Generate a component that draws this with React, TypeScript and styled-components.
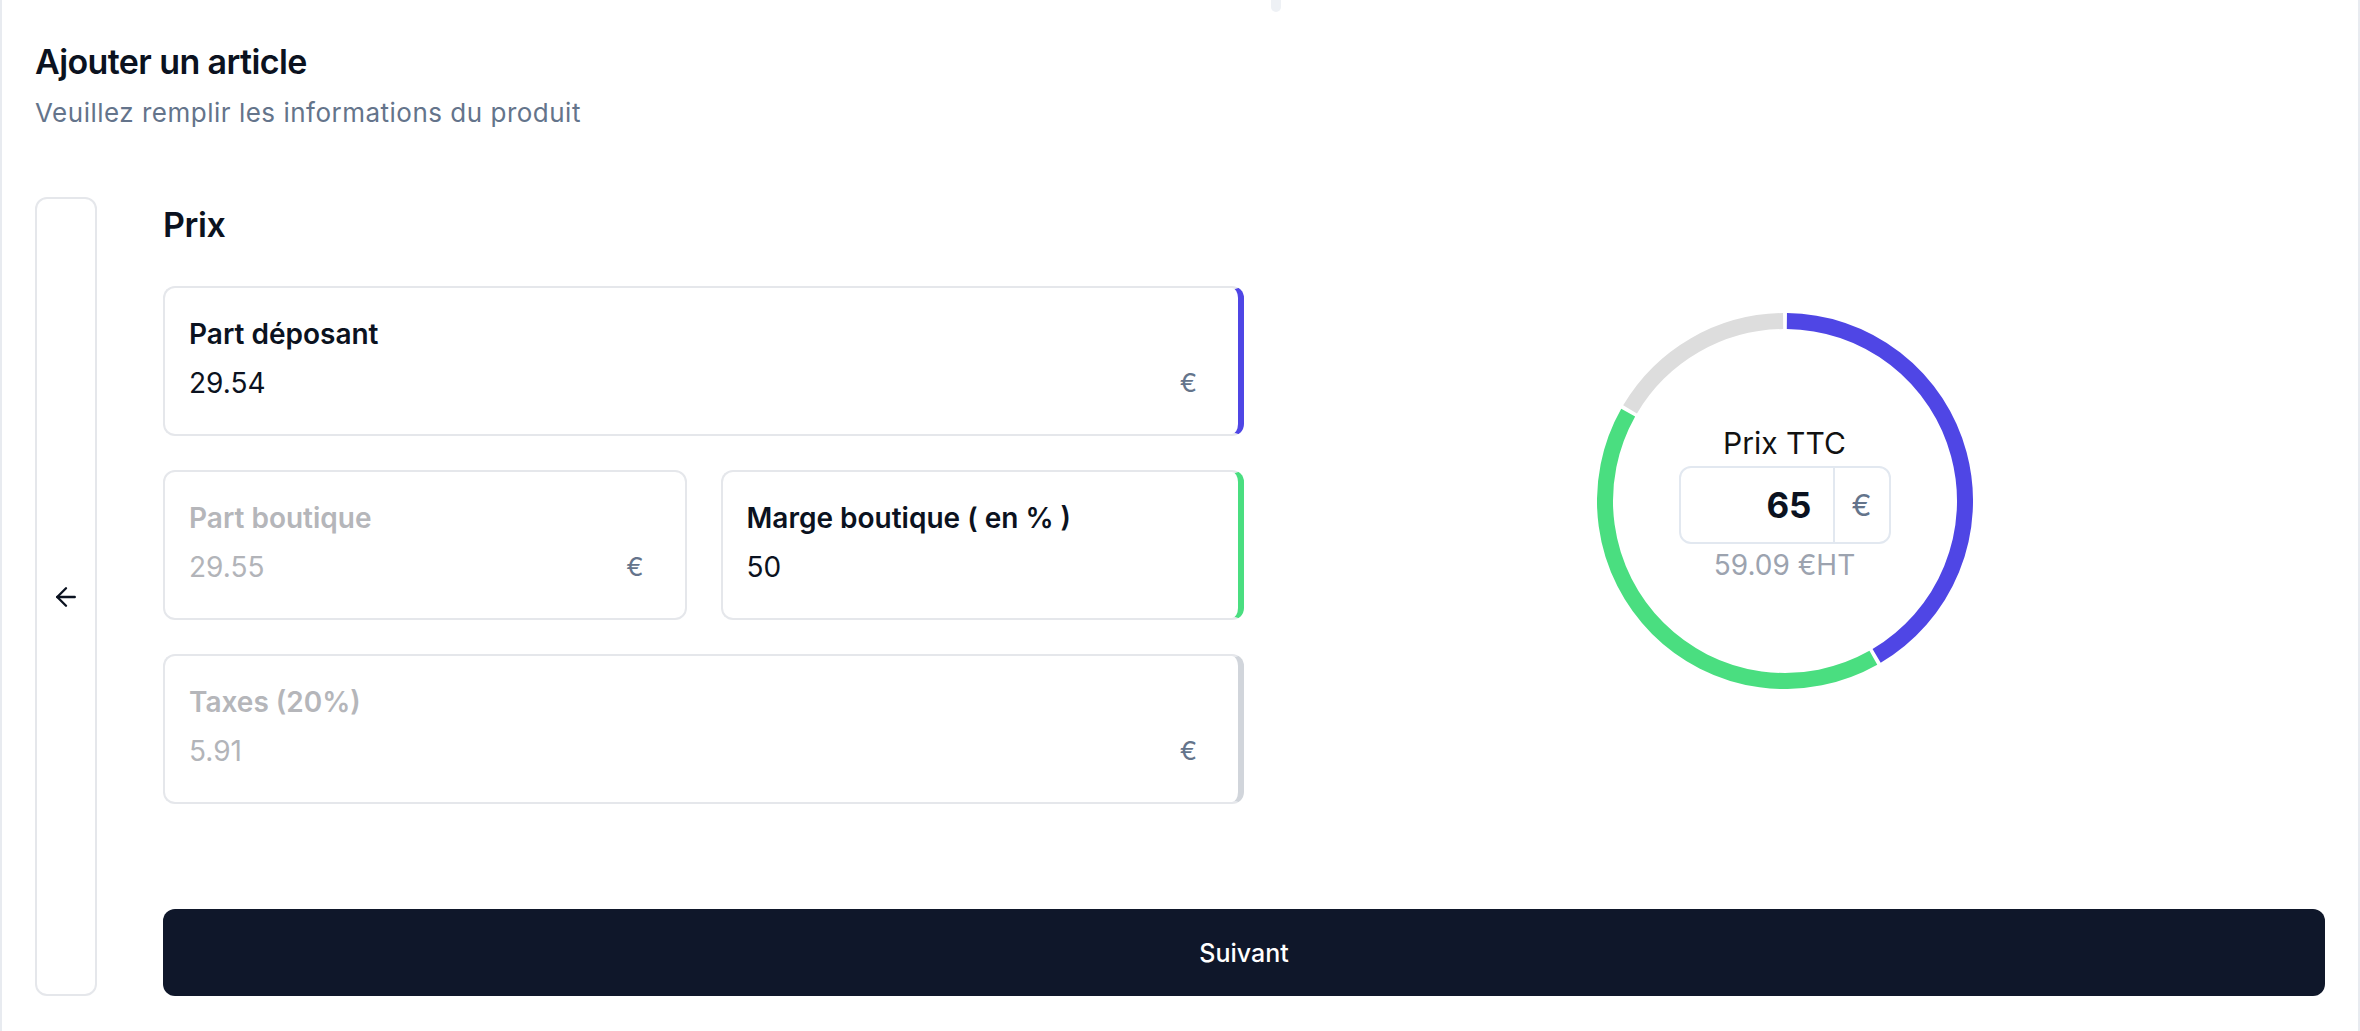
import { FC } from "react";
import styled, { createGlobalStyle } from "styled-components";
import { ArrowLeft } from "lucide-react";

const GlobalStyle = createGlobalStyle`
    html, body {
        margin: 0;
        padding: 0;
        background: #ffffff;
    }
    body {
        font-family: Inter, "Noto Sans", "Liberation Sans", sans-serif;
        color: #0f172a;
        -webkit-font-smoothing: antialiased;
    }
    * {
        box-sizing: border-box;
    }
`;

type Field = {
    label: string;
    value: string;
    accent?: string;
    disabled?: boolean;
    suffix?: boolean;
};

const deposant: Field = { label: "Part déposant", value: "29.54", accent: "#4f46e5", suffix: true };
const boutique: Field = { label: "Part boutique", value: "29.55", disabled: true, suffix: true };
const marge: Field = { label: "Marge boutique ( en % )", value: "50", accent: "#4ade80" };
const taxes: Field = { label: "Taxes (20%)", value: "5.91", accent: "#d1d5db", disabled: true, suffix: true };

// segments of the ring, in degrees clockwise from 12 o'clock
const segments = [
    { from: 0, to: 150, color: "#4f46e5" },
    { from: 150, to: 300, color: "#4ade80" },
    { from: 300, to: 360, color: "#dddddd" },
];

const arcPath = (from: number, to: number, r: number, c: number): string => {
    const rad = (d: number) => (d * Math.PI) / 180;
    const x1 = c + r * Math.sin(rad(from));
    const y1 = c - r * Math.cos(rad(from));
    const x2 = c + r * Math.sin(rad(to));
    const y2 = c - r * Math.cos(rad(to));
    const large = to - from > 180 ? 1 : 0;
    return `M ${x1} ${y1} A ${r} ${r} 0 ${large} 1 ${x2} ${y2}`;
};

const FieldCard: FC<{ field: Field }> = ({ field }) => (
    <StyledField $accent={field.accent}>
        <FieldLabel $disabled={field.disabled}>{field.label}</FieldLabel>
        <InputRow>
            <FieldValue $disabled={field.disabled}>{field.value}</FieldValue>
            {field.suffix && <Suffix>€</Suffix>}
        </InputRow>
    </StyledField>
);

const Donut: FC = () => {
    const gap = 0.6;
    return (
        <DonutWrapper>
            <svg width="376" height="376" viewBox="0 0 376 376">
                {segments.map((s, id) => (
                    <path
                        key={id}
                        d={arcPath(s.from + gap, s.to - gap, 180, 188)}
                        fill="none"
                        stroke={s.color}
                        strokeWidth={16}
                    />
                ))}
            </svg>
            <DonutCenter>
                <TtcLabel>Prix TTC</TtcLabel>
                <TtcBox>
                    <TtcValue>65</TtcValue>
                    <TtcAddon>€</TtcAddon>
                </TtcBox>
                <HtLabel>59.09 €HT</HtLabel>
            </DonutCenter>
        </DonutWrapper>
    );
};

const App: FC = () => {
    return (
        <>
            <GlobalStyle />
            <StyledCard>
                <ScrollNub />
                <Title>Ajouter un article</Title>
                <Subtitle>Veuillez remplir les informations du produit</Subtitle>
                <StyledBody>
                    <BackButton aria-label="Retour">
                        <ArrowLeft size={30} strokeWidth={1.9} />
                    </BackButton>
                    <StyledMain>
                        <StyledGrid>
                            <StyledFields>
                                <SectionTitle>Prix</SectionTitle>
                                <FieldCard field={deposant} />
                                <StyledRow>
                                    <FieldCard field={boutique} />
                                    <FieldCard field={marge} />
                                </StyledRow>
                                <FieldCard field={taxes} />
                            </StyledFields>
                            <Donut />
                        </StyledGrid>
                        <NextButton>Suivant</NextButton>
                    </StyledMain>
                </StyledBody>
            </StyledCard>
        </>
    );
};

export default App;

const StyledCard = styled.div`
    position: relative;
    min-height: 1031px;
    border-left: 2px solid #e8ebf0;
    border-right: 2px solid #e8ebf0;
    padding: 40px 33px 35px 33px;
    background: #ffffff;
`;

const ScrollNub = styled.span`
    position: absolute;
    top: -4px;
    left: 1269px;
    width: 10px;
    height: 16px;
    border-radius: 5px;
    background: #eef1f5;
`;

const Title = styled.h1`
    margin: 0;
    font-size: 34px;
    line-height: 44px;
    font-weight: 600;
    letter-spacing: -0.6px;
    color: #0b1220;
`;

const Subtitle = styled.p`
    margin: 13px 0 0 0;
    font-size: 26px;
    line-height: 32px;
    font-weight: 400;
    letter-spacing: 0.5px;
    color: #64748b;
`;

const StyledBody = styled.div`
    display: flex;
    align-items: stretch;
    gap: 66px;
    margin-top: 68px;
`;

const BackButton = styled.button`
    width: 62px;
    flex: 0 0 62px;
    border: 2px solid #e5e7eb;
    border-radius: 12px;
    background: #ffffff;
    color: #0b1220;
    display: flex;
    align-items: center;
    justify-content: center;
    padding: 0;
    cursor: pointer;
`;

const StyledMain = styled.div`
    flex: 1;
    display: flex;
    flex-direction: column;
`;

const StyledGrid = styled.div`
    display: grid;
    grid-template-columns: 1fr 1fr;
    align-items: center;
`;

const StyledFields = styled.div`
    display: flex;
    flex-direction: column;
    gap: 34px;
`;

const SectionTitle = styled.h2`
    margin: 8px 0 7px 0;
    font-size: 34px;
    line-height: 40px;
    font-weight: 600;
    letter-spacing: -0.4px;
    color: #0b1220;
`;

const StyledRow = styled.div`
    display: grid;
    grid-template-columns: 1fr 1fr;
    gap: 34px;
`;

const StyledField = styled.div<{ $accent?: string }>`
    height: 150px;
    border: 2px solid #e5e7eb;
    border-right: ${(p) => (p.$accent ? `6px solid ${p.$accent}` : "2px solid #e5e7eb")};
    border-radius: 12px;
    padding: 26px 24px 0 24px;
    background: #ffffff;
`;

const FieldLabel = styled.div<{ $disabled?: boolean }>`
    font-size: 28px;
    line-height: 40px;
    font-weight: 600;
    color: ${(p) => (p.$disabled ? "#b5b6ba" : "#0b1220")};
`;

const InputRow = styled.div`
    margin-top: 9px;
    height: 40px;
    display: flex;
    align-items: center;
    justify-content: space-between;
`;

const FieldValue = styled.span<{ $disabled?: boolean }>`
    font-size: 28px;
    line-height: 40px;
    font-weight: 400;
    color: ${(p) => (p.$disabled ? "#b2b4b9" : "#0b1220")};
`;

const Suffix = styled.span`
    margin-right: 17px;
    font-size: 26px;
    line-height: 40px;
    color: #64748b;
`;

const DonutWrapper = styled.div`
    display: grid;
    place-items: center;
    justify-self: center;

    & > * {
        grid-area: 1 / 1;
    }
`;

const DonutCenter = styled.div`
    display: flex;
    flex-direction: column;
    align-items: center;
    padding-top: 6px;
`;

const TtcLabel = styled.div`
    font-size: 30px;
    line-height: 36px;
    color: #111111;
`;

const TtcBox = styled.div`
    margin-top: 5px;
    width: 212px;
    height: 78px;
    display: flex;
    border: 2px solid #e2e8f0;
    border-radius: 12px;
    overflow: hidden;
`;

const TtcValue = styled.div`
    flex: 1;
    display: flex;
    align-items: center;
    justify-content: flex-end;
    padding-right: 21px;
    font-size: 35px;
    font-weight: 700;
    color: #0b1220;
    border-right: 2px solid #e2e8f0;
`;

const TtcAddon = styled.div`
    width: 54px;
    display: flex;
    align-items: center;
    justify-content: center;
    font-size: 30px;
    color: #64748b;
`;

const HtLabel = styled.div`
    margin-top: 3px;
    font-size: 28px;
    line-height: 36px;
    color: #9ca3af;
`;

const NextButton = styled.button`
    margin-top: 105px;
    height: 87px;
    width: 100%;
    border: none;
    border-radius: 12px;
    background: #0f172a;
    color: #ffffff;
    font-family: Inter, "Noto Sans", "Liberation Sans", sans-serif;
    font-size: 25px;
    font-weight: 500;
    cursor: pointer;
`;
